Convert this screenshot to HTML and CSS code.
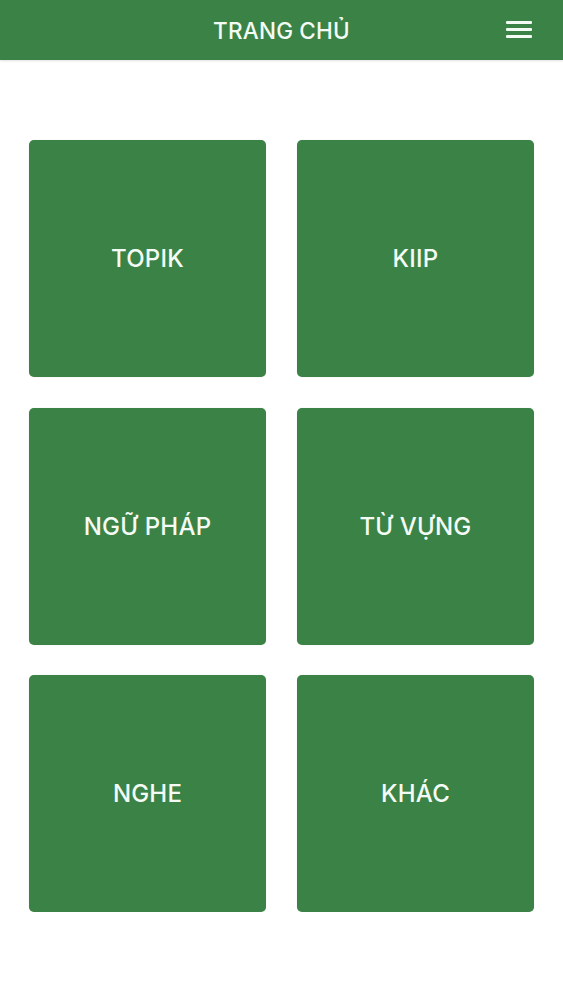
FILE: index.html
```html
<!DOCTYPE html>
<html lang="vi">
<head>
<meta charset="utf-8">
<title>Trang chủ</title>
<link rel="stylesheet" href="styles.css">
</head>
<body>
<header class="topbar">
  <h1 class="topbar-title">TRANG CHỦ</h1>
  <button class="menu-btn" aria-label="Menu">
    <svg width="26" height="18" viewBox="0 0 26 18"><rect x="0" y="0" width="26" height="3" rx="1" fill="#f4fbf4"/><rect x="0" y="7" width="26" height="3" rx="1" fill="#f4fbf4"/><rect x="0" y="14" width="26" height="3" rx="1" fill="#f4fbf4"/></svg>
  </button>
</header>
<main class="grid">
  <a class="tile">TOPIK</a>
  <a class="tile">KIIP</a>
  <a class="tile">NGỮ PHÁP</a>
  <a class="tile">TỪ VỰNG</a>
  <a class="tile">NGHE</a>
  <a class="tile">KHÁC</a>
</main>
</body>
</html>
```
FILE: styles.css
```css
* { box-sizing: border-box; }
body {
  margin: 0;
  background: #ffffff;
  font-family: Inter, Roboto, "Noto Sans", sans-serif;
}
.topbar {
  position: relative;
  height: 60px;
  background: #3b8246;
  display: flex;
  align-items: center;
  justify-content: center;
  box-shadow: 0 1px 2px rgba(0,0,0,0.12);
}
.topbar-title {
  margin: 0;
  color: #f4fbf4;
  font-size: 22.5px;
  font-weight: 500;
  letter-spacing: 0.2px;
}
.menu-btn {
  position: absolute;
  right: 31px;
  top: 21px;
  padding: 0;
  border: 0;
  background: none;
  line-height: 0;
}
.grid {
  display: grid;
  grid-template-columns: 237px 237px;
  grid-auto-rows: 237px;
  gap: 30.5px 31px;
  padding: 80px 0 0 29px;
}
.tile {
  display: flex;
  align-items: center;
  justify-content: center;
  background: #3b8246;
  border-radius: 5px;
  color: #f4fbf4;
  font-size: 24px;
  font-weight: 500;
  letter-spacing: 0.2px;
  box-shadow: 0 0 1px rgba(0,0,0,0.2);
}
```
